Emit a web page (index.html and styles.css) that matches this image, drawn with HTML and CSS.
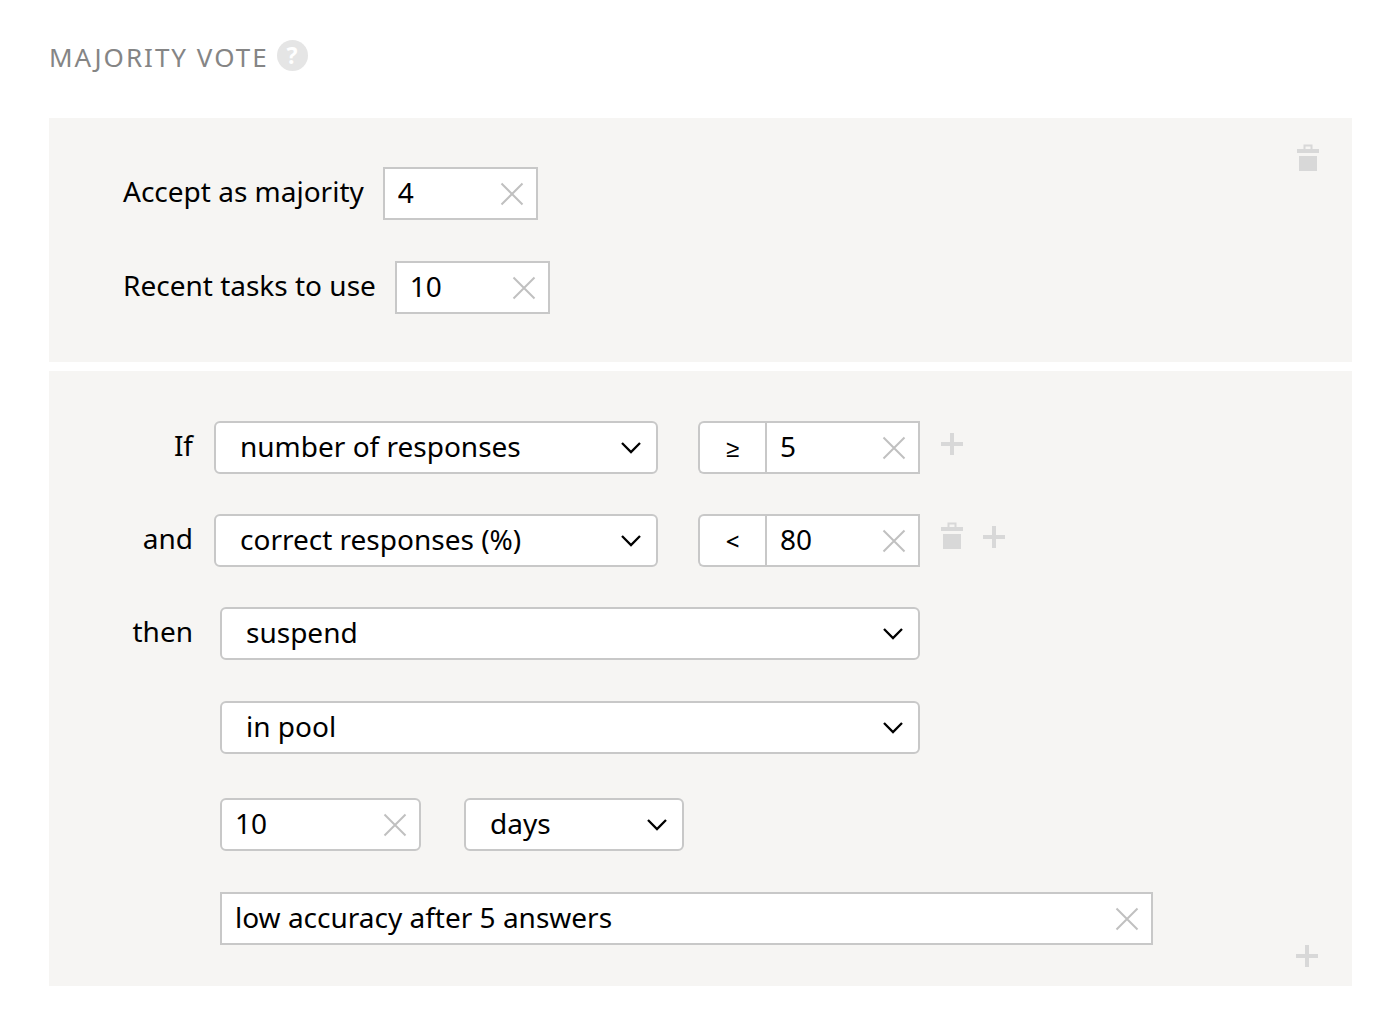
FILE: index.html
```html
<!DOCTYPE html>
<html lang="en">
<head>
<meta charset="utf-8">
<meta name="viewport" content="width=device-width, initial-scale=1">
<title>Majority vote</title>
<link rel="stylesheet" href="styles.css">
</head>
<body>
<svg class="sprite" aria-hidden="true">
  <symbol id="cross" viewBox="0 0 24 24"><path d="M1.500 1.500L22.500 22.500M22.500 1.500L1.500 22.500" fill="none" stroke="currentColor" stroke-width="2"/></symbol>
  <symbol id="chevron" viewBox="0 0 20 12"><path d="M1 1L10 10L19 1" fill="none" stroke="currentColor" stroke-width="2.3"/></symbol>
  <symbol id="plus" viewBox="0 0 22 22"><path d="M9 0h4v9h9v4h-9v9h-4v-9h-9v-4h9z" fill="currentColor"/></symbol>
  <symbol id="trash" viewBox="0 0 22 28"><path d="M7.500 5V1.500H14.500V5" fill="none" stroke="currentColor" stroke-width="2"/><path d="M0 5h22v4H0zM2 12h18v15H2z" fill="currentColor"/></symbol>
</svg>
<main class="rule">
  <header class="title">
    <h1>MAJORITY VOTE</h1>
    <button class="help" type="button" aria-label="Help">?</button>
  </header>

  <section class="panel">
    <div class="settings">
      <div class="row">
        <label class="label" for="majority">Accept as majority</label>
        <div class="field short"><input id="majority" type="text" value="4"><button type="button" aria-label="Clear"><svg><use href="#cross"/></svg></button></div>
      </div>
      <div class="row">
        <label class="label" for="recent">Recent tasks to use</label>
        <div class="field short"><input id="recent" type="text" value="10"><button type="button" aria-label="Clear"><svg><use href="#cross"/></svg></button></div>
      </div>
    </div>
    <button class="action trash" type="button" aria-label="Delete rule"><svg><use href="#trash"/></svg></button>
  </section>

  <section class="panel">
    <div class="conditions">
      <div class="row">
        <label class="label lead" for="cond1">If</label>
        <div class="select parameter"><select id="cond1"><option>number of responses</option></select><svg><use href="#chevron"/></svg></div>
        <div class="compare">
          <button class="operator" type="button">≥</button>
          <div class="field short"><input type="text" value="5" aria-label="Number of responses"><button type="button" aria-label="Clear"><svg><use href="#cross"/></svg></button></div>
        </div>
        <div class="tools">
          <button class="action plus" type="button" aria-label="Add condition"><svg><use href="#plus"/></svg></button>
        </div>
      </div>
      <div class="row">
        <label class="label lead" for="cond2">and</label>
        <div class="select parameter"><select id="cond2"><option>correct responses (%)</option></select><svg><use href="#chevron"/></svg></div>
        <div class="compare">
          <button class="operator" type="button">&lt;</button>
          <div class="field short"><input type="text" value="80" aria-label="Correct responses"><button type="button" aria-label="Clear"><svg><use href="#cross"/></svg></button></div>
        </div>
        <div class="tools">
          <button class="action trash" type="button" aria-label="Delete condition"><svg><use href="#trash"/></svg></button>
          <button class="action plus" type="button" aria-label="Add condition"><svg><use href="#plus"/></svg></button>
        </div>
      </div>
      <div class="row outcome">
        <label class="label lead" for="act">then</label>
        <div class="details">
          <div class="select wide"><select id="act"><option>suspend</option></select><svg><use href="#chevron"/></svg></div>
          <div class="select wide"><select aria-label="Scope"><option>in pool</option></select><svg><use href="#chevron"/></svg></div>
          <div class="period">
            <div class="field amount"><input type="text" value="10" aria-label="Duration"><button type="button" aria-label="Clear"><svg><use href="#cross"/></svg></button></div>
            <div class="select unit"><select aria-label="Unit"><option>days</option></select><svg><use href="#chevron"/></svg></div>
          </div>
          <div class="field comment"><input type="text" value="low accuracy after 5 answers" aria-label="Comment"><button type="button" aria-label="Clear"><svg><use href="#cross"/></svg></button></div>
        </div>
      </div>
    </div>
    <button class="action plus end" type="button" aria-label="Add action"><svg><use href="#plus"/></svg></button>
  </section>
</main>
</body>
</html>
```
FILE: styles.css
```css
* {
  box-sizing: border-box;
}

body {
  margin: 0;
  background: #fff;
  color: #000;
  font: 28px/36px "Noto Sans", sans-serif;
}

button,
input,
select {
  font: inherit;
  color: inherit;
  margin: 0;
  padding: 0;
  border: 0;
  background: none;
  border-radius: 0;
}

svg {
  display: block;
}

.sprite {
  position: absolute;
  width: 0;
  height: 0;
}

.rule {
  padding: 40px 48px 44px 49px;
}

.title {
  display: flex;
  align-items: flex-start;
  gap: 8px;
  margin-bottom: 42px;
}

.title h1 {
  margin: 0;
  color: #858585;
  font-size: 26px;
  font-weight: 400;
  line-height: 34px;
  letter-spacing: 2px;
}

.help {
  width: 31px;
  height: 31px;
  margin-bottom: 5px;
  border-radius: 50%;
  background: #e5e5e5;
  color: #fff;
  font-size: 23px;
  font-weight: 700;
  line-height: 31px;
}

.panel {
  display: flex;
  justify-content: space-between;
  margin-bottom: 9px;
  background: #f6f5f3;
}

.settings,
.conditions {
  display: flex;
  flex: 1;
  flex-direction: column;
}

.settings {
  gap: 41px;
  padding: 49px 0 48px 74px;
}

.conditions {
  gap: 40px;
  padding: 50px 0 41px;
}

.row {
  display: flex;
  align-items: center;
}

.settings .row {
  gap: 19px;
}

.label {
  padding-bottom: 6px;
}

.lead {
  width: 144px;
  margin-right: 21px;
  text-align: right;
}

.field {
  display: flex;
  align-items: center;
  height: 53px;
  border: 2px solid #c8c8c8;
  background: #fff;
}

.field input {
  flex: 1;
  min-width: 0;
  height: 100%;
  padding: 0 0 3px 13px;
  outline: 0;
}

.field button {
  padding: 0 12px;
  color: #c0c0c0;
}

.field svg {
  width: 24px;
  height: 24px;
}

.short {
  width: 155px;
}

.select {
  display: grid;
  align-items: center;
}

.select select {
  grid-area: 1 / 1;
  width: 100%;
  height: 53px;
  padding: 0 48px 3px 24px;
  border: 2px solid #c8c8c8;
  border-radius: 6px;
  background: #fff;
  appearance: none;
}

.select svg {
  grid-area: 1 / 1;
  justify-self: end;
  width: 20px;
  height: 12px;
  margin-right: 17px;
  pointer-events: none;
}

.parameter {
  width: 444px;
  margin-right: 40px;
}

.compare {
  display: flex;
}

.operator {
  width: 67px;
  height: 53px;
  border: 2px solid #c8c8c8;
  border-right: 0;
  border-radius: 6px 0 0 6px;
  background: #fff;
  font-size: 24px;
  font-weight: 500;
}

.tools {
  display: flex;
  align-items: center;
  gap: 20px;
  margin-left: 21px;
  padding-bottom: 7px;
}

.action {
  color: #d8d8d8;
}

.action svg {
  width: 22px;
  height: 22px;
}

.trash svg {
  height: 28px;
}

.tools .trash {
  padding-bottom: 3px;
}

.panel > .action {
  align-self: flex-start;
  margin: 26px 33px 0 0;
}

.panel > .end {
  align-self: flex-end;
  margin: 0 34px 19px 0;
}

.outcome {
  align-items: flex-start;
}

.outcome .lead {
  margin-right: 27px;
  padding-top: 6px;
}

.details {
  display: flex;
  flex: 1;
  flex-direction: column;
  gap: 41px;
}

.wide {
  width: 700px;
}

.period {
  display: flex;
  gap: 43px;
  margin-top: 3px;
}

.amount {
  width: 201px;
  border-radius: 6px;
}

.unit {
  width: 220px;
}

.comment {
  width: 100%;
  max-width: 933px;
}
```
